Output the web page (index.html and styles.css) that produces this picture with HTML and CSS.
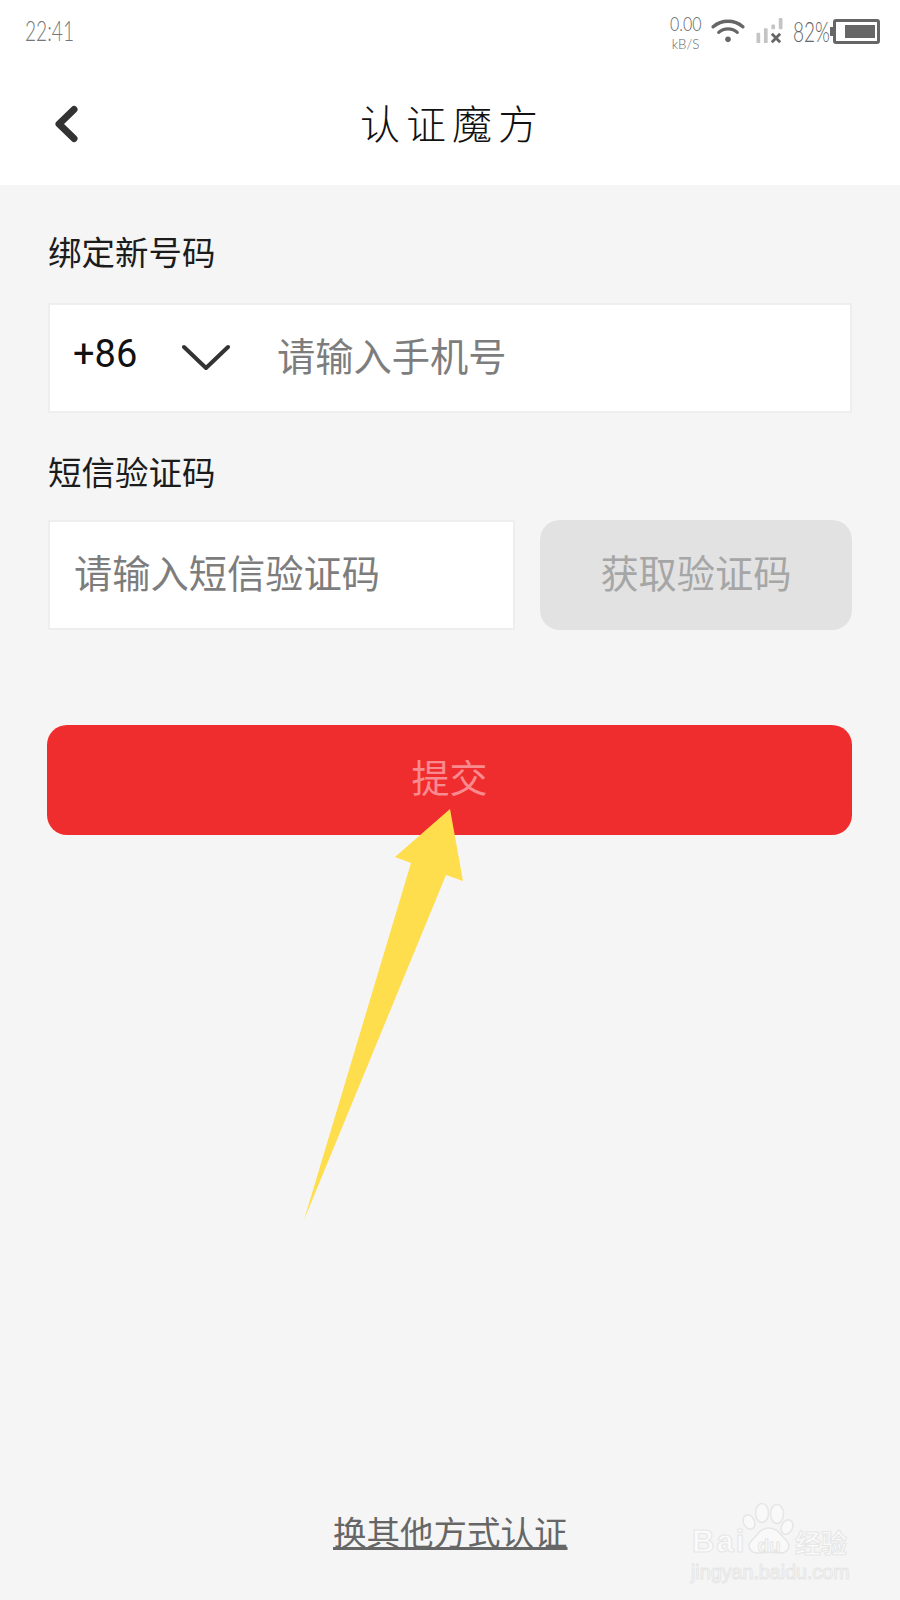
FILE: index.html

```html
<!DOCTYPE html>
<html>
<head>
    <title>认证魔方</title>
    <meta http-equiv="Content-Type" content="text/html;charset=UTF-8"/>
    <link rel="stylesheet" href="styles.css">
</head>
<body>
<div class="screen">
    <div class="top-white">
        <div class="status-bar">
            <span class="clock">22:41</span>
            <div class="status-right">
                <div class="net-speed">
                    <span class="net-num">0.00</span>
                    <span class="net-unit">kB/S</span>
                </div>
                <svg class="wifi" width="34" height="26" viewBox="0 0 36 28">
                    <path d="M2 9.5C11 1.5 25 1.5 34 9.5" fill="none" stroke="#666" stroke-width="3.6" stroke-linecap="round"/>
                    <path d="M8 15.5C13.5 10.5 22.5 10.5 28 15.5" fill="none" stroke="#666" stroke-width="3.4" stroke-linecap="round"/>
                    <circle cx="18" cy="23" r="3" fill="#666"/>
                </svg>
                <svg class="signal" width="27" height="26" viewBox="0 0 28 28">
                    <rect x="0" y="16" width="4" height="11" rx="1" fill="#c4c4c4"/>
                    <rect x="8" y="11" width="4" height="16" rx="1" fill="#c4c4c4"/>
                    <rect x="16" y="7" width="4" height="5" rx="1" fill="#c4c4c4"/>
                    <rect x="24" y="0" width="4" height="12" rx="1" fill="#c4c4c4"/>
                    <path d="M16.5 17L25.5 26M25.5 17L16.5 26" stroke="#666" stroke-width="3" fill="none"/>
                </svg>
                <div class="battery-num"><span>82%</span></div>
                <div class="battery">
                    <div class="battery-fill"></div>
                </div>
            </div>
        </div>
        <div class="title-bar">
            <svg class="back" width="26" height="38" viewBox="0 0 26 38">
                <path d="M21 4.5L6 19L21 33.5" fill="none" stroke="#333" stroke-width="7" stroke-linecap="round" stroke-linejoin="round"/>
            </svg>
            <h1 class="page-title">认证魔方</h1>
        </div>
    </div>

    <div class="form">
        <div class="field-label first">绑定新号码</div>
        <div class="input-box">
            <span class="area-code">+86</span>
            <svg class="area-arrow" width="48" height="28" viewBox="0 0 48 28">
                <path d="M2 3L24 24L46 3" fill="none" stroke="#333" stroke-width="4" stroke-linecap="round" stroke-linejoin="round"/>
            </svg>
            <span class="placeholder">请输入手机号</span>
        </div>

        <div class="field-label">短信验证码</div>
        <div class="code-row">
            <div class="input-box code-input">
                <span class="placeholder">请输入短信验证码</span>
            </div>
            <div class="code-btn">获取验证码</div>
        </div>

        <div class="submit-btn">提交</div>
    </div>

    <div class="other-way">
        <a>换其他方式认证</a>
    </div>

    <!-- arrow painted on top of the screenshot -->
    <svg class="mark-arrow" width="900" height="1600" viewBox="0 0 900 1600">
        <polygon points="450,809 463,881 446,875 304,1220 411,863 395,857" fill="#ffde4d"/>
    </svg>

    <div class="watermark">
        <svg class="paw" width="54" height="54" viewBox="742 1502 54 54">
            <g fill="#f9f9f9" stroke="#e6e6e6" stroke-width="1.5">
                <ellipse cx="749" cy="1522" rx="5.5" ry="7.5" transform="rotate(-25 749 1522)"/>
                <ellipse cx="762" cy="1513" rx="6.5" ry="9.5"/>
                <ellipse cx="777" cy="1514" rx="6.5" ry="9.5"/>
                <ellipse cx="787" cy="1527" rx="5.5" ry="7.5" transform="rotate(25 787 1527)"/>
                <path d="M769 1528C778 1528 781 1536 786 1540C792 1546 788 1554 778 1553C772 1552 766 1552 760 1553C750 1554 746 1546 752 1540C757 1536 760 1528 769 1528Z"/>
            </g>
        </svg>
        <div class="wm-line">
            <span class="wm-bai">Bai</span><span class="wm-du">du</span><span class="wm-jy">经验</span>
        </div>
        <div class="wm-url">jingyan.baidu.com</div>
    </div>
</div>
</body>
</html>
```

FILE: styles.css

```css
* {
    box-sizing: border-box;
}

html, body {
    margin: 0;
    padding: 0;
}

body {
    font-family: "Noto Sans CJK SC", "Noto Sans", sans-serif;
    background-color: #f5f5f5;
}

.screen {
    position: relative;
    width: 900px;
    height: 1600px;
    overflow: hidden;
    display: flex;
    flex-direction: column;
}

.top-white {
    background-color: #fff;
    height: 185px;
}

.status-bar {
    height: 62px;
    padding: 0 20px 0 25px;
    display: flex;
    justify-content: space-between;
    align-items: center;
    color: #666;
    font-family: "Lato", "Liberation Sans", sans-serif;
    font-weight: 300;
}

.clock {
    width: 47px;
    margin-bottom: 2px;
    font-size: 27px;
    line-height: 27px;
    white-space: nowrap;
    color: #777;
    transform: scaleX(.71);
    transform-origin: left center;
}

.status-right {
    display: flex;
    align-items: center;
}

.net-speed {
    width: 28px;
    margin-right: 11px;
    display: flex;
    flex-direction: column;
    align-items: center;
}

.net-num {
    font-size: 20px;
    line-height: 24px;
    transform: scaleX(.8);
}

.net-unit {
    font-size: 14px;
    line-height: 17px;
    white-space: nowrap;
    transform: scaleX(.95);
}

.wifi {
    margin-right: 11px;
}

.signal {
    margin-right: 10px;
}

.battery-num {
    width: 35px;
    margin-right: 5px;
    font-size: 28px;
    line-height: 28px;
    white-space: nowrap;
}

.battery-num span {
    display: inline-block;
    transform: scaleX(.68);
    transform-origin: left center;
}

.battery {
    position: relative;
    width: 47px;
    height: 25px;
    border: 3px solid #666;
    border-radius: 3px;
    padding: 3px 2px 3px 9px;
}

.battery:before {
    content: "";
    position: absolute;
    left: -6px;
    top: 5px;
    width: 3px;
    height: 9px;
    background-color: #666;
}

.battery-fill {
    height: 100%;
    background-color: #666;
}

.title-bar {
    position: relative;
    height: 123px;
    display: flex;
    align-items: center;
    justify-content: center;
    padding-bottom: 4px;
}

.back {
    position: absolute;
    left: 53px;
    top: 43px;
}

.page-title {
    margin: 0 0 0 4px;
    font-weight: 300;
    font-size: 40px;
    letter-spacing: 6px;
    color: #111;
}

.form {
    padding: 0 48px;
}

.field-label {
    font-size: 33.5px;
    line-height: 48px;
    color: #1c1c1c;
    margin-top: 34px;
    margin-bottom: 25px;
}

.field-label.first {
    margin-top: 42px;
    margin-bottom: 28px;
}

.input-box {
    display: flex;
    align-items: center;
    height: 110px;
    background-color: #fff;
    border: 2px solid #eee;
    padding-left: 23px;
    padding-bottom: 8px;
}

.area-code {
    font-family: "Roboto", "Noto Sans", sans-serif;
    font-size: 38px;
    color: #111;
    width: 109px;
}

.area-arrow {
    margin-top: 8px;
    margin-right: 47px;
}

.placeholder {
    font-size: 38.25px;
    color: #7d7d7d;
}

.code-row {
    display: flex;
    gap: 25px;
}

.code-input {
    width: 467px;
    padding-left: 24px;
}

.code-btn {
    flex: 1;
    height: 110px;
    border-radius: 20px;
    background-color: #e2e2e2;
    color: #a6a6a6;
    font-size: 38.25px;
    display: flex;
    align-items: center;
    justify-content: center;
    padding-bottom: 8px;
}

.submit-btn {
    height: 110px;
    margin-top: 95px;
    margin-left: -1px;
    border-radius: 20px;
    background-color: #f02d2e;
    color: #f98b90;
    font-size: 38px;
    display: flex;
    align-items: center;
    justify-content: center;
    padding-bottom: 10px;
}

.other-way {
    margin-top: auto;
    height: 94px;
    padding-left: 333px;
    font-size: 33.5px;
    color: #666;
}

.other-way a {
    text-decoration: underline;
    text-decoration-thickness: 3px;
}

.mark-arrow {
    position: absolute;
    left: 0;
    top: 0;
}

.watermark {
    position: absolute;
    left: 690px;
    top: 1502px;
    width: 165px;
    height: 92px;
    color: #fafafa;
    font-family: "Liberation Sans", sans-serif;
    -webkit-text-stroke: 1px #e6e6e6;
}

.paw {
    position: absolute;
    left: 52px;
    top: 0;
}

.wm-line {
    position: absolute;
    left: 2px;
    top: 20px;
    white-space: nowrap;
    display: flex;
    align-items: center;
}

.wm-bai {
    width: 56px;
    font-size: 31px;
    font-weight: bold;
    letter-spacing: 2px;
    line-height: 40px;
}

.wm-du {
    position: relative;
    width: 42px;
    font-size: 19px;
    font-weight: bold;
    line-height: 40px;
    text-align: center;
    top: 4px;
}

.wm-jy {
    font-family: "Noto Sans CJK SC", sans-serif;
    font-size: 26px;
    line-height: 40px;
    font-weight: bold;
    margin-left: 5px;
}

.wm-url {
    position: absolute;
    left: 1px;
    top: 58px;
    font-size: 19.7px;
    line-height: 24px;
    white-space: nowrap;
}
```
